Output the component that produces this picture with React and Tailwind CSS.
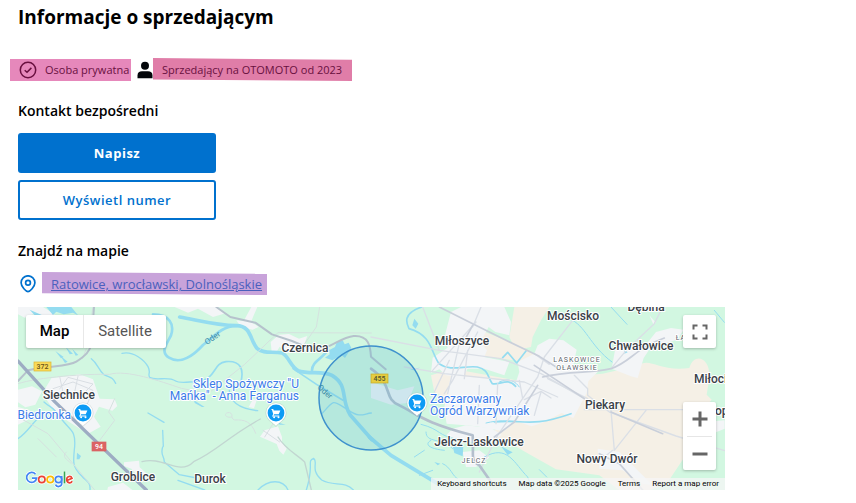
import React from "react";

const labels = [
  { x: 305, y: 352, text: "Czernica", anchor: "middle" },
  { x: 69, y: 399, text: "Siechnice", anchor: "middle" },
  { x: 133, y: 481, text: "Groblice", anchor: "middle" },
  { x: 210, y: 483, text: "Durok", anchor: "middle" },
  { x: 462, y: 345, text: "Miłoszyce", anchor: "middle" },
  { x: 479, y: 446, text: "Jelcz-Laskowice", anchor: "middle" },
  { x: 573, y: 320, text: "Mościsko", anchor: "middle" },
  { x: 646, y: 311, text: "Dębina", anchor: "middle" },
  { x: 641, y: 350, text: "Chwałowice", anchor: "middle" },
  { x: 605, y: 409, text: "Piekary", anchor: "middle" },
  { x: 607, y: 463, text: "Nowy Dwór", anchor: "middle" },
  { x: 694, y: 383, text: "Miłocice", anchor: "start" },
  { x: 715, y: 415, text: "opa", anchor: "start" },
];

const districts = [
  { x: 577, y: 362, text: "LASKOWICE" },
  { x: 577, y: 370, text: "OŁAWSKIE" },
  { x: 474, y: 463, text: "JELCZ" },
  { x: 686, y: 340, text: "ŁAZY" },
];

const places = [
  { x: 71, y: 419, text: "Biedronka", anchor: "end" },
  { x: 299, y: 388, text: 'Sklep Spożywczy "U', anchor: "end" },
  { x: 299, y: 400, text: 'Mańka" - Anna Farganus', anchor: "end" },
  { x: 430, y: 403, text: "Zaczarowany", anchor: "start" },
  { x: 430, y: 415, text: "Ogród Warzywniak", anchor: "start" },
];

const pins = [
  { x: 83, y: 413 },
  { x: 276, y: 413 },
  { x: 417, y: 403 },
];

function CheckCircle() {
  return (
    <svg className="h-[18px] w-[18px] shrink-0" viewBox="0 0 18 18" fill="none" stroke="#69103f" strokeWidth="1.5" aria-hidden="true">
      <circle cx="9" cy="9" r="7.7" />
      <path d="M5.7 9.2 8 11.3 12.4 6.9" />
    </svg>
  );
}

function Person() {
  return (
    <svg className="h-[18px] w-4 shrink-0" viewBox="0 0 16 18" fill="#03060a" aria-hidden="true">
      <circle cx="8" cy="4.8" r="4" />
      <path d="M.5 17.3v-2.8c0-2.8 1.8-4.2 4.5-4.2h6c2.7 0 4.5 1.4 4.5 4.2v2.800Z" />
    </svg>
  );
}

function LocationPin() {
  return (
    <svg className="h-[18px] w-4 shrink-0" viewBox="0 0 16 18" fill="none" stroke="#0071ce" strokeWidth="1.7" aria-hidden="true">
      <path d="M8 16.7C6.3 16.7 1.1 11.800 1.1 7.700a6.900 6.900 0 0 1 13.800 0c0 4.100-5.200 9-6.900 9Z" />
      <circle cx="8" cy="7.700" r="2.400" />
    </svg>
  );
}

function ShopPin({ x, y }) {
  return (
    <g transform={`translate(${x} ${y})`}>
      <path d="M0 14C-2 11-10.500 7-10.500 0a10.500 10.500 0 0 1 21 0C10.500 7 2 11 0 14Z" fill="#8a9aa0" opacity=".3" />
      <path d="M0 13C-2 10-9.800 7-9.800-.2a9.800 9.800 0 0 1 19.600 0C9.800 7 2 10 0 13Z" fill="#fff" />
      <circle r="8.400" fill="#0c9bf5" />
      <path d="M-4.500-4h1.700l.6 1.400h6.600L2.700 1.200h-4.500l-.7 1.200h5.800v1h-7.300l1.200-2.300-1.200-4.100h-.5Z" fill="#fff" />
      <circle cx="-1.900" cy="4.300" r="1" fill="#fff" />
      <circle cx="2.500" cy="4.300" r="1" fill="#fff" />
    </g>
  );
}

function RoadSign({ x, y, width, text, fill, stroke, color }) {
  return (
    <g>
      <rect x={x} y={y} width={width} height="9" fill={fill} stroke={stroke} strokeWidth=".7" />
      <text x={x + width / 2} y={y + 7} textAnchor="middle" className="text-[7px] font-medium" fill={color}>{text}</text>
    </g>
  );
}

/* Each half of the terrain is drawn on a grid three times finer than the map. */
function WestTerrain() {
  return (
    <g transform="translate(18 307) scale(.33333)" fill="none" strokeLinejoin="round" strokeLinecap="round">
      <g fill="#f3f5f7">
        <path d="M100 214l85-12 40 15 20 58 45 2 8 20-15 14-40-12-15 30 20 30-35 20-30-15-70-45-40-60Z" />
        <path d="M0 248l42-10 30 15-20 40-30 8-22-15ZM0 300l35 10-5 28-30 15ZM0 0h75l35 22-20 15-45-15-25 10-20-10Z" />
        <path d="M470 0h130l25 18-40 12-45-25-30 12ZM700 0h18l-12 28-12 30-15-20ZM655 40l45 5 22 15-18 8-35-8Z" />
        <path d="M758 105l25-22 30-2 30 14 25-8-8 22 30 20-85 8-20-18-12 20-12-5Z" />
        <path d="M740 370l40-12 12 32 0 15 14 20-10 18-12-12-8-20-50-22ZM706 275l10 5-8 24-16-4ZM318 466l45-5 2 20 20 18-20 14-25-28-22-8ZM270 540l45-13 28 22h-75Z" />
      </g>
      <g fill="#94dcf0">
        <path d="M1000 122l-8-15-12 5-6-12-18 6-5 14-18 10 2 12-14 10 22 8 28-15 10 8ZM85 0h75l20 25-15-8-28 5-22-8-10 10ZM35 8l50 22-10 5-25-10Z" />
        <path d="M143 120l22 20-10 2ZM163 126l18 18-8 2ZM112 132l25 18-8 4ZM127 146l22 18-8 4ZM177 437l12 10-5 10-8 0ZM528 280l32 20-8 0-22-12ZM775 345l28 8-18 0Z" />
      </g>
      <g stroke="#94dcf0">
        <path strokeWidth="11" d="M485 30c65 12 110 25 170 26 45 0 40 42 62 68 20 18 45 8 76 14 20 12 25 40 47 53 32 12 74-1 102 14 50 30 25 70 54 118l66 75" />
        <path strokeWidth="8" d="M405 22c50 0 65 30 54 63-12 25-34 50-6 67 35 22 75-8 102-38 35-28 58-57 100-57M882 190c0-27 32-35 48-62" />
        <path strokeWidth="5" d="M537 222c60-2 45-53 87-58 45-4 55 23 44 65M825 185l75 50 75 45" />
        <path strokeWidth="4" d="M220 155c20 15 18 30 38 48 18 10 24 5 35 26M312 139c35-8 68 22 78 40 10 20-2 20 5 32 20 12 55-5 78 11 15 10 60-2 66 4M0 395c30-20 40-45 70-70M78 285c22 20 25 10 50 48 30 40 45 35 42 85-5 50-8 60 22 90 12 15 26 15 24 41M634 250c0 30 25 55 85 61M390 318l48 28M434 370l2 48M434 420c-8 25 5 25 5 45l45 38 52 10M720 549c30-32 75-34 90 0M865 549c25-80 0-85 22-95 15 10-12 35 24 65 35 20 70 2 95 30M480 520l80 29M912 320c40-45 30-40 80-10 35 24 45 10 68 8" />
      </g>
      <g stroke="#d5e1df" strokeWidth="3">
        <path d="M0 230c60-20 210-30 275-28 50-15 150 20 215 42l60 12M580 252l100-80 100-95 280 1M905 0l-10 60-35 50M225 0l-20 125-12 30" />
        <path d="M0 330l90 50 75 90 65 79M60 395l55 55M160 470c-15-15-30-20-15-35M290 275l-18 40 18 25-45 60M640 330c-20 5-25-15-5-13 15 5-2 15 15 22 30-2 50 5 63 40" />
        <path d="M125 208l10 48 45 20 45-45-75-20-25 35M105 245l60-20 60 25-25 60-42 25M180 208l-15 70M735 370l50 35M765 350l-25 40" stroke="#d9dee3" />
      </g>
      <path d="M372 464c65-18 110 45 155 0 75-35 95-70 200-128M780 390c20 35 60 55 80 75l20 84" stroke="#c2d6d1" strokeWidth="4" />
      <path d="M0 222l30-32c60-15 120-10 145-26 30-20 38-30 45-50l8-114M595 0l42 30 75 17 50 35 60 20 60 25c50 5 80-35 125-40 45-3 50 30 52 62l44 38" stroke="#b6c2cc" strokeWidth="6" />
      <path d="M0 162l110 122 275 265" stroke="#9dacc3" strokeWidth="10" />
    </g>
  );
}

function EastTerrain() {
  return (
    <g transform="translate(371 307) scale(.33333)" fill="none" strokeLinejoin="round" strokeLinecap="round">
      <g fill="#f5f0e6">
        <path d="M430 0h105l-25 40-25 50-5 30-45 10-20-40ZM330 70l110 45 50 25-25 25-60-8-90-12Z" />
        <path d="M180 205l65-20 190 35 260-20 110-25c30-25 60 20 150 8 15-50 65-30 60 30l-8 50 15 15-65 75-15 45 10 35-60 90-60 30H750l-65-48-130-18-80-45-55-32-60-10 20-50-190-95Z" />
      </g>
      <g fill="#f3f5f7">
        <path d="M240 15l30-15h130l20 45-5 40-42-10-20-15-25 45 20 25-8 20 75 15-15 40-60-20-50 0-15 25-50-5-20-18-25 10 5-45 45-30-10-30Z" />
        <path d="M190 175l40-50 28 8-25 55ZM240 205l120 10 75 10 10-30-5-30 50-25 10-25 35-20 42 5 40 28-10 45 40 10 35 10-30 30-5 35-40 75-35-15-60 30-30 10-45-15-40 30-80-15-90-8-8-45Z" />
        <path d="M245 365l40-10 75 8 32 20-35 25-90-5-40-20ZM275 435l50-5 30 22-40 28h-30ZM722 185l10-55 65-20 30 0 28-35 45-12 38 5-20 30-80 25-20 30-18 60-20-5ZM835 25l20 22-8 5ZM680 425l65 10 60 60 40 40-30-5-60-40-70-5ZM0 225l80 25 50-12-20 50-50 5-60-20ZM955 360l45-15 61-5v25l-75 30Z" />
      </g>
      <g stroke="#94dcf0">
        <path strokeWidth="11" d="M-5 390l65 55 140 85" />
        <path strokeWidth="5" d="M152 0c-60 20-45 50-38 65 70 20 65 70 90 105 35 25 75 5 115 10 35 8 30 30 45 50 25 5 45-20 70 8M395 152l15-16 27 32 28-36M370 345c90-10 100 20 230-25" />
        <path strokeWidth="3" d="M150 352c60 15 50 35 110 45M165 375c0 35 45 15 80 50M345 348c40-10 60-5 90-5M340 450c70-40 90 20 130 60l15 39M180 400c-20 10-10 25 40 30M595 35c50 20 60 80 128 130M720 0l48 52M1030 10l30 36M385 225c30-15 50 0 60 15M505 488l22 22M130 450l30-20M145 505l40-15M215 470c25 10 30 40 45 45" />
      </g>
      <g fill="#94dcf0">
        <path d="M130 35l12 15-8 15-10-10ZM245 418h32l-2 30-25-10ZM390 418l35 18-15 8ZM115 185l32-3-20 8ZM760 128l10 8-10 4ZM190 465l18 5-8 5Z" />
      </g>
      <g stroke="#dadfe6" strokeWidth="4">
        <path d="M0 90l205 40 185 25 120 45 130 75M100 180l120 20 240 25 100 45M315 45l-130 145M320 75l-75 145-25 40M330 0l-25 60M205 130l-50-130M265 110l-35 150M290 130l-10 85" />
        <path d="M605 40l-85 110-20 60-35 50-85 125-55 110M445 220l10 55M490 140l45 32M510 255l-20 70M530 215l120 60M870 10l-20 40-80 75-50 60M325 235l-5 115M380 230l-5 120" />
        <path d="M650 265l65 50 200 72 146 44M640 308h421M720 310l10 120 95-120M650 265v-20l-40-40M700 450l25-20M235 160l-45 95M460 278l50-25 30 20" />
      </g>
      <g stroke="#c9cfda" strokeWidth="5">
        <path d="M205 0l100 50 100 50 100 48 60 38M515 210c80-20 150-10 205-25 60-20 70-60 160-92M305 55l-30 55M500 235l-70 110-60 45M490 175l150 100M720 315l155 65M685 440l60 30 70 79" />
      </g>
      <path d="M0 185c70 50 35 90 85 110 60 30 70 50 220 90 5 60-10 75 20 90l35 50" stroke="#b4bfcd" strokeWidth="8" />
    </g>
  );
}

function MapDrawing() {
  return (
    <svg
      className="absolute inset-0 h-full w-full font-['Roboto',sans-serif]"
      viewBox="18 307 707 183"
      preserveAspectRatio="xMinYMin slice"
      role="img"
      aria-label="Ratowice"
    >
      <rect x="18" y="307" width="707" height="183" fill="#d2f7e1" />
      <EastTerrain />
      <WestTerrain />

      <circle cx="371" cy="398" r="52" fill="#56b7ce" fillOpacity=".23" stroke="#3e91cd" strokeWidth="1.500" />

      <RoadSign x={34} y={362} width={17} text="372" fill="#f9da58" stroke="#dfb533" color="#66531a" />
      <RoadSign x={371} y={374} width={17} text="455" fill="#e5cd40" stroke="#c5a92b" color="#51542d" />
      <RoadSign x={92} y={442} width={14} text="94" fill="#db6364" stroke="#db6364" color="#fff" />

      <g className="text-[8px]" fill="#3b8ba8">
        <text x="207" y="345" transform="rotate(-35 207 345)">Oder</text>
        <text x="317" y="388" transform="rotate(42 317 388)">Oder</text>
      </g>

      {pins.map((pin) => <ShopPin key={`${pin.x}-${pin.y}`} {...pin} />)}

      <g stroke="#fff" strokeWidth="2" strokeLinejoin="round" paintOrder="stroke">
        {labels.map(({ x, y, text, anchor }) => (
          <text key={text} x={x} y={y} textAnchor={anchor} className="text-[12px] font-medium" fill="#3a4148">{text}</text>
        ))}
        {places.map(({ x, y, text, anchor }) => (
          <text key={text} x={x} y={y} textAnchor={anchor} className="text-[12px]" fill="#3b7ce8">{text}</text>
        ))}
        {districts.map(({ x, y, text }) => (
          <text key={text} x={x} y={y} textAnchor="middle" className="text-[7px] tracking-[1px]" fill="#596068">{text}</text>
        ))}
      </g>
    </svg>
  );
}

function LogoStrokes({ outline }) {
  const tint = (color) => (outline ? "#ffffff" : color);
  return (
    <g fill="none" strokeWidth={outline ? 3.4 : 1.7}>
      <path stroke={tint("#4285f4")} d="M9.500 4.200A5 5 0 1 0 10.600 8.200H6" />
      <circle cx="15.800" cy="9.500" r="3.200" stroke={tint("#ea4335")} />
      <circle cx="24.300" cy="9.500" r="3.200" stroke={tint("#fbbc05")} />
      <circle cx="32.500" cy="9.500" r="3.200" stroke={tint("#4285f4")} />
      <path stroke={tint("#4285f4")} d="M35.700 6v7.500c0 3.500-5 4-6.200 1.200" />
      <path stroke={tint("#34a853")} d="M38.500 1.500V13.300" />
      <path stroke={tint("#ea4335")} d="M46.200 11.200c-1.700 2.700-5.500 1.700-5.500-1.700 0-3.500 4.200-4.200 5.300-1.200l-5 2.200" />
    </g>
  );
}

function GoogleLogo() {
  return (
    <svg className="h-[20px] w-[48px]" viewBox="0 0 48 20" role="img" aria-label="Google">
      <LogoStrokes outline />
      <LogoStrokes />
    </svg>
  );
}

function MapPanel() {
  return (
    <div className="relative mt-3 h-[183px] w-full max-w-[707px] overflow-hidden font-['Roboto',sans-serif]">
      <MapDrawing />

      <div className="absolute top-2 left-2 flex h-[33px] rounded-[2px] bg-white text-[15px] leading-[33px] shadow-[0_1px_3px_rgba(0,0,0,0.25)]">
        <button type="button" className="w-[58px] border-r border-[#e8e8e8] font-medium text-black">Map</button>
        <button type="button" className="w-[82px] text-[#565656]">Satellite</button>
      </div>

      <button type="button" aria-label="Toggle fullscreen view" className="absolute top-2 right-[9px] grid h-[33px] w-[33px] place-items-center rounded-[2px] bg-white shadow-[0_1px_3px_rgba(0,0,0,0.25)]">
        <svg className="h-4 w-4" viewBox="0 0 16 16" fill="none" stroke="#666" strokeWidth="2" aria-hidden="true">
          <path d="M1.500 5.500v-4h4M10.500 1.500h4v4M14.500 10.500v4h-4M5.500 14.500h-4v-4" />
        </svg>
      </button>

      <div className="absolute right-[9px] bottom-5 flex w-[33px] flex-col items-center rounded-[2px] bg-white shadow-[0_1px_3px_rgba(0,0,0,0.25)]">
        <button type="button" aria-label="Zoom in" className="grid h-[34px] w-full place-items-center">
          <svg className="h-4 w-4" viewBox="0 0 16 16" stroke="#666" strokeWidth="3" aria-hidden="true"><path d="M8 .5v15M.5 8h15" /></svg>
        </button>
        <div className="h-px w-[25px] bg-[#e6e6e6]" />
        <button type="button" aria-label="Zoom out" className="grid h-[33px] w-full place-items-center">
          <svg className="h-4 w-4" viewBox="0 0 16 16" stroke="#666" strokeWidth="3" aria-hidden="true"><path d="M.5 8h15" /></svg>
        </button>
      </div>

      <div className="absolute bottom-0 left-2"><GoogleLogo /></div>

      <div className="absolute right-0 bottom-0 flex h-3 bg-[#f5f5f5]/75 text-[8px] leading-3 whitespace-nowrap text-black">
        <button type="button" className="px-[6px]">Keyboard shortcuts</button>
        <span className="px-[6px]">Map data ©2025 Google</span>
        <a href="#terms" className="px-[6px]">Terms</a>
        <a href="#report" className="px-[6px]">Report a map error</a>
      </div>
    </div>
  );
}

export default function App() {
  return (
    <main className="bg-white px-[18px] pt-1 pb-3 font-['Open_Sans','Noto_Sans',sans-serif] text-black">
      <h1 className="text-[19px] leading-[26px] font-bold">Informacje o sprzedającym</h1>

      <div className="mt-7 -ml-2 flex items-center text-[11px] leading-[23px] whitespace-nowrap text-[#69103f]">
        <div className="flex h-[22px] w-[121px] items-center gap-2 bg-[#e688bb] pl-[9px]">
          <CheckCircle />
          <span>Osoba prywatna</span>
        </div>
        <div className="flex items-center pl-[6px]">
          <Person />
          <span className="h-[23px] w-[199px] bg-[#e07da8] pl-[9px] [clip-path:polygon(0_0,100%_8%,100%_100%,0_93%)]">Sprzedający na OTOMOTO od 2023</span>
        </div>
      </div>

      <section>
        <h2 className="mt-5 text-[14px] leading-5 font-semibold">Kontakt bezpośredni</h2>
        <div className="mt-3 flex w-[198px] flex-col gap-[7px] text-[13px] tracking-[0.5px]">
          <button type="button" className="h-10 rounded-[3px] bg-[#0071ce] pt-px font-bold text-white">Napisz</button>
          <button type="button" className="h-10 rounded-[3px] border-2 border-[#0071ce] bg-white pt-px font-semibold text-[#0071ce]">Wyświetl numer</button>
        </div>
      </section>

      <section>
        <h2 className="mt-[21px] text-[14px] leading-5 font-semibold">Znajdź na mapie</h2>
        <div className="mt-[11px] flex items-center gap-[6px] pl-[2px]">
          <LocationPin />
          <a href="#map" className="h-[23px] w-[225px] bg-[#c8a3da] pl-[9px] text-[13px] leading-[25px] whitespace-nowrap text-[#4b60bd] underline [clip-path:polygon(0_0,100%_8%,100%_100%,0_92%)]">Ratowice, wrocławski, Dolnośląskie</a>
        </div>
        <MapPanel />
      </section>
    </main>
  );
}
